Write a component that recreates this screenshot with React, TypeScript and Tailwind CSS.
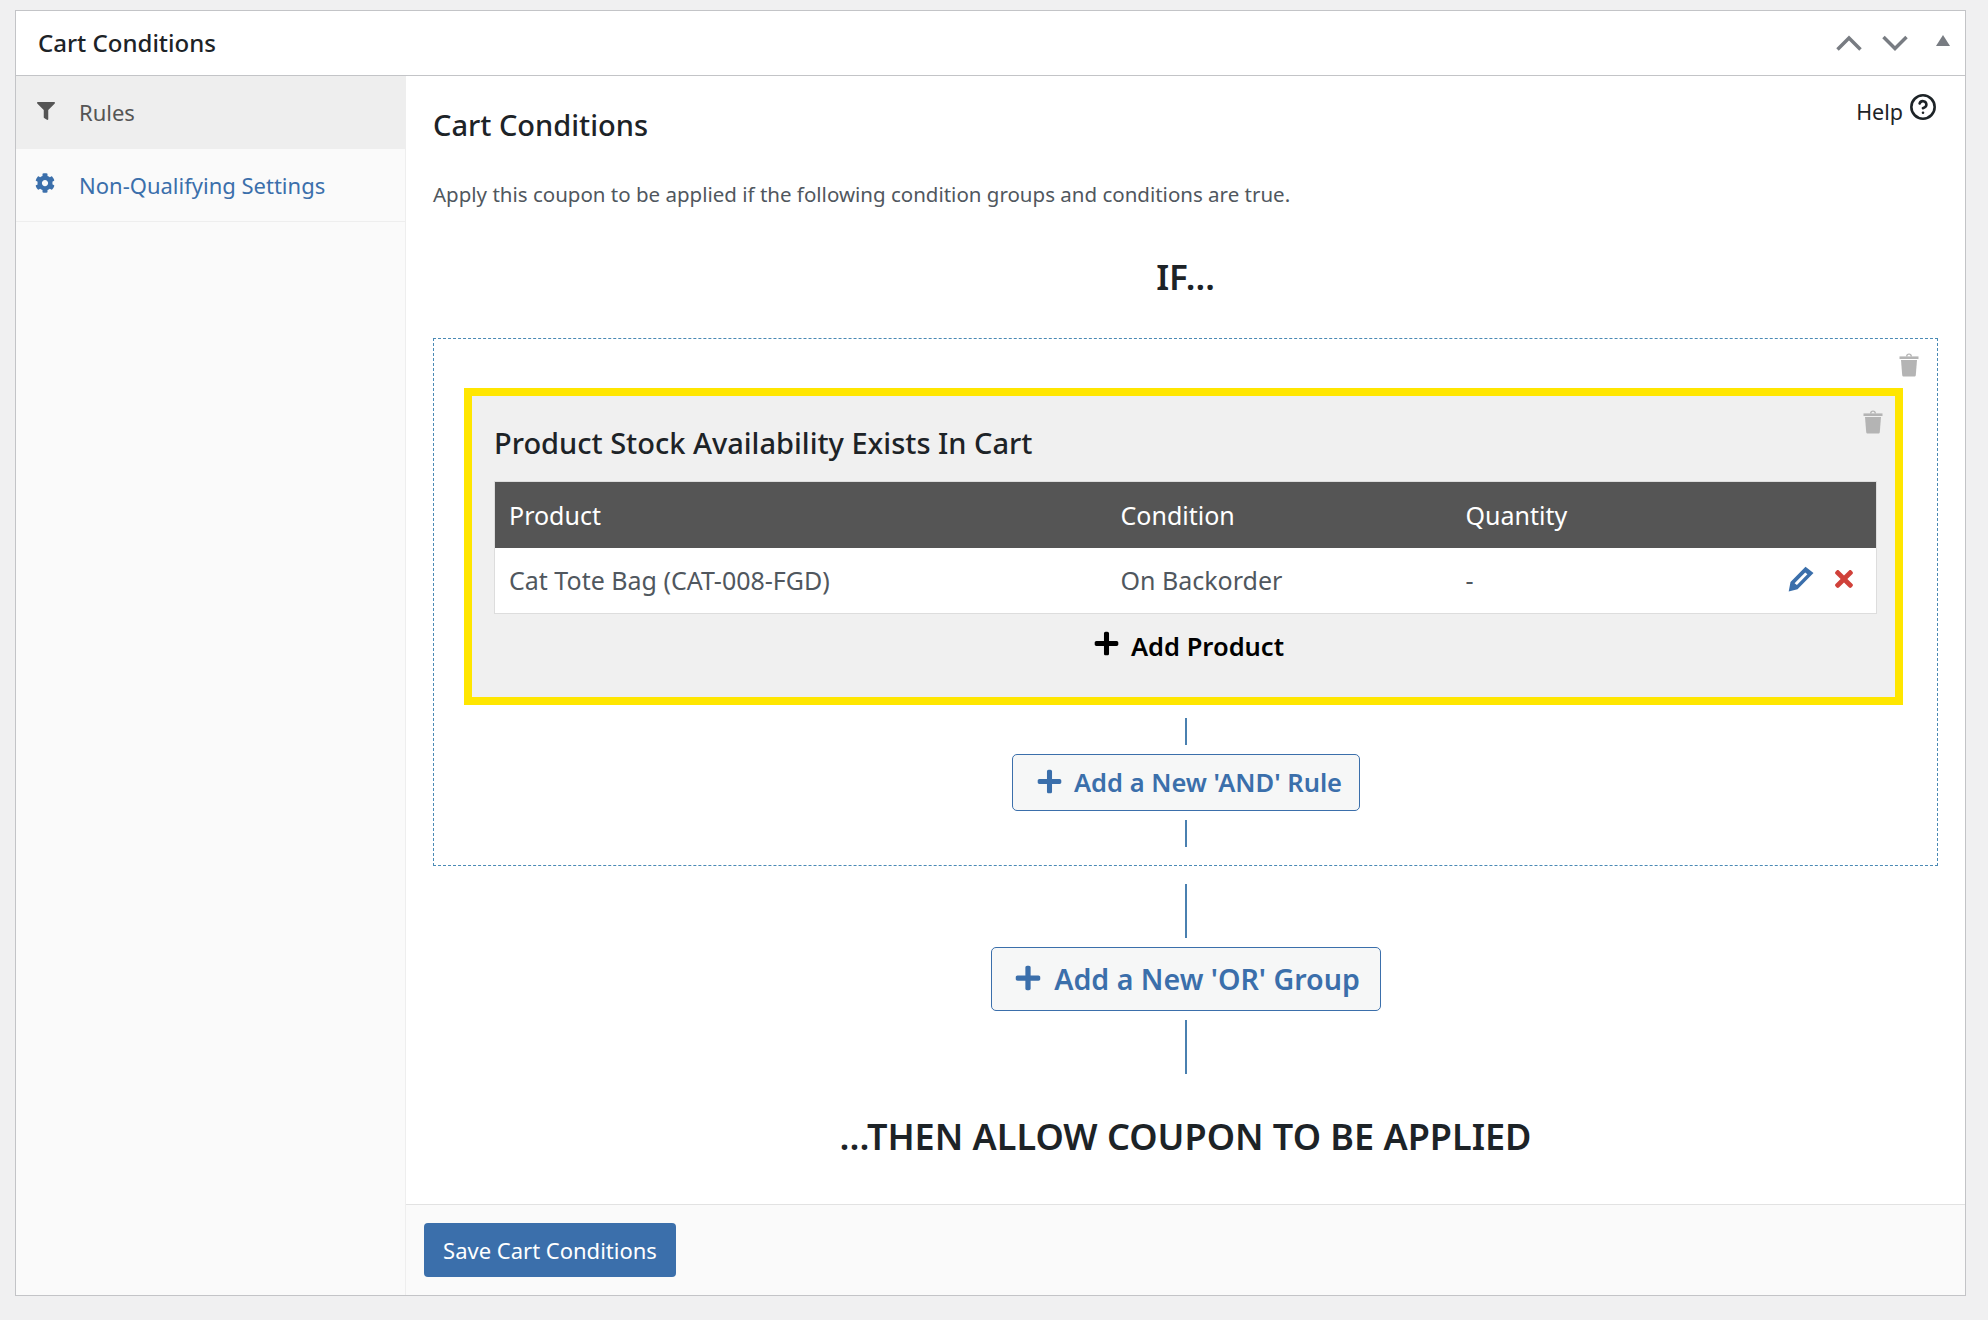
import { CircleHelp } from "lucide-react";
import { FaCog, FaFilter, FaPlus, FaTimes } from "react-icons/fa";

function TrashIcon() {
  return (
    <svg width="20" height="24" viewBox="0 0 20 24" fill="#b4b4b4">
      <path d="M0.5 3.4h19v2.6H0.5z" />
      <path d="M7 3.4C7 1.4 8.2 0.4 10 0.4s3 1 3 3h-1.4c0-1-.6-1.6-1.6-1.6S8.4 2.4 8.4 3.4z" />
      <path d="M2 7h16l-1.2 15c-.1 1-.7 1.5-1.7 1.5H4.9c-1 0-1.6-.5-1.7-1.5z" />
    </svg>
  );
}

function PencilIcon() {
  return (
    <svg width="26" height="26" viewBox="0 0 26 26">
      <path
        fill="#3b6fab"
        fillRule="evenodd"
        d="M17.5 0.8 25.5 7 9.5 23.2 0.7 25.5 2.5 16zM17.2 6.5 6.6 17.3 8.9 19 19.4 8.3z"
      />
    </svg>
  );
}

function Connector({ height }: { height: string }) {
  return <div className={`w-[2px] bg-[#4a80b0] ${height}`} />;
}

export default function App() {
  return (
    <div className="min-h-[1320px] bg-[#f0f0f1] px-[15px] pt-[10px] font-['Noto_Sans',sans-serif] text-[#1d2327]">
      <div className="flex h-[1286px] w-[1951px] flex-col border border-[#c3c4c7] bg-white">
        <div className="flex h-[65px] shrink-0 items-center justify-between border-b border-[#c3c4c7] pl-[22px] pr-[15px]">
          <h2 className="text-[24px] font-medium">Cart Conditions</h2>
          <div className="flex items-center gap-[20px]">
            <svg width="26" height="16" viewBox="0 0 26 16" fill="none" stroke="#787c82" strokeWidth="3.5">
              <path d="M1.5 14.5 13 3 24.5 14.5" />
            </svg>
            <svg width="26" height="16" viewBox="0 0 26 16" fill="none" stroke="#787c82" strokeWidth="3.5">
              <path d="M1.5 2 13 13.5 24.5 2" />
            </svg>
            <svg width="14" height="11" viewBox="0 0 14 11" fill="#787c82" className="mb-[5px] ml-[8px]">
              <path d="M7 0 14 11H0z" />
            </svg>
          </div>
        </div>

        <div className="flex min-h-0 flex-1">
          <aside className="w-[390px] shrink-0 border-r border-[#eeeeee] bg-[#fafafa]">
            <div className="flex h-[73px] items-center bg-[#eeeeee] pl-[21px] text-[#555555]">
              <FaFilter className="mb-[4px] size-[18px]" />
              <span className="ml-[24px] text-[22px]">Rules</span>
            </div>
            <div className="flex h-[73px] items-center border-b border-[#eeeeee] pl-[19px] text-[#3b6fab]">
              <FaCog className="mb-[4px] size-[20px]" />
              <span className="ml-[24px] pt-[1px] text-[22px]">Non-Qualifying Settings</span>
            </div>
          </aside>

          <div className="flex min-w-0 flex-1 flex-col">
            <main className="relative flex-1 px-[27px]">
              <div className="absolute right-[28px] top-[21px] flex items-center gap-[6px] text-[21.5px] leading-[29px] text-[#1d2327]">
                Help
                <CircleHelp className="-mt-[10px] size-[28px]" strokeWidth={2.2} />
              </div>
              <h1 className="pt-[29px] text-[29px] font-medium leading-[40px]">Cart Conditions</h1>
              <p className="mt-[34px] text-[20.5px] leading-[30px] text-[#50575e]">
                Apply this coupon to be applied if the following condition groups and conditions are true.
              </p>
              <h3 className="mt-[48px] text-center text-[35px] font-semibold leading-[40px]">IF...</h3>

              <div className="relative mt-[41px] flex h-[528px] w-[1505px] flex-col items-center border border-dashed border-[#4a8ab5] pt-[49px]">
                <div className="absolute right-[18px] top-[14px]">
                  <TrashIcon />
                </div>
                <div className="relative ml-[30px] flex h-[317px] w-[1439px] flex-col self-start border-[8px] border-[#ffe600] bg-[#f0f0f0] px-[22px] pt-[27px]">
                  <div className="absolute right-[12px] top-[14px]">
                    <TrashIcon />
                  </div>
                  <h4 className="text-[29px] font-medium leading-[40px]">Product Stock Availability Exists In Cart</h4>
                  <table className="mt-[18px] w-[1383px] table-fixed border border-[#dddddd] bg-white text-[25px]">
                    <thead>
                      <tr className="h-[66px] bg-[#555555] text-left text-white">
                        <th className="w-[626px] pl-[14px] pt-[1px] font-normal">Product</th>
                        <th className="w-[345px] pl-0 pt-[1px] font-normal">Condition</th>
                        <th className="pl-0 pt-[1px] font-normal">Quantity</th>
                        <th className="w-[120px]" />
                      </tr>
                    </thead>
                    <tbody>
                      <tr className="h-[66px] text-[#50575e]">
                        <td className="pl-[14px]">Cat Tote Bag (CAT-008-FGD)</td>
                        <td>On Backorder</td>
                        <td>-</td>
                        <td>
                          <div className="flex items-center justify-end gap-[17px] pb-[3px] pr-[19px]">
                            <PencilIcon />
                            <FaTimes className="size-[26px] text-[#d0413a]" />
                          </div>
                        </td>
                      </tr>
                    </tbody>
                  </table>
                  <div className="flex h-[65px] items-center justify-center gap-[11px] pl-[10px] text-[25.5px] font-semibold text-black">
                    <FaPlus className="mb-[6px] size-[27px]" />
                    Add Product
                  </div>
                </div>

                <div className="mt-[13px]">
                  <Connector height="h-[27px]" />
                </div>
                <button className="mt-[9px] flex h-[57px] w-[348px] items-center justify-center gap-[11px] rounded-[5px] border border-[#3b6fab] bg-[#f6f7f7] pl-[7px] text-[25.5px] font-semibold text-[#3b6fab]">
                  <FaPlus className="mb-[2px] size-[27px]" />
                  Add a New 'AND' Rule
                </button>
                <div className="mt-[9px]">
                  <Connector height="h-[27px]" />
                </div>
              </div>

              <div className="flex flex-col items-center">
                <div className="mt-[18px]">
                  <Connector height="h-[54px]" />
                </div>
                <button className="mt-[9px] flex h-[64px] w-[390px] items-center justify-center gap-[12px] rounded-[5px] border border-[#3b6fab] bg-[#f6f7f7] pl-[3px] pt-[1px] text-[28.6px] font-semibold text-[#3b6fab]">
                  <FaPlus className="mb-[4px] size-[28px]" />
                  Add a New 'OR' Group
                </button>
                <div className="mt-[9px]">
                  <Connector height="h-[54px]" />
                </div>
                <h3 className="mt-[43px] text-center text-[36px] font-semibold leading-[40px]">
                  ...THEN ALLOW COUPON TO BE APPLIED
                </h3>
              </div>
            </main>
            <footer className="flex h-[91px] shrink-0 items-center border-t border-[#e2e2e2] bg-[#fafafa] pl-[18px]">
              <button className="h-[54px] w-[252px] rounded-[4px] bg-[#3b6fab] text-[22px] text-white">
                Save Cart Conditions
              </button>
            </footer>
          </div>
        </div>
      </div>
    </div>
  );
}
